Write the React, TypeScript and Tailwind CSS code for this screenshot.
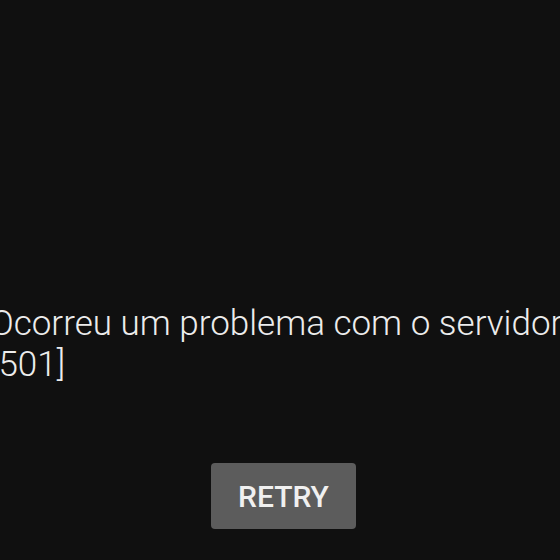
export default function App() {
  return (
    <div
      className="flex h-[560px] w-[560px] flex-col overflow-hidden bg-[#101010] pt-[303px]"
      style={{ fontFamily: 'Roboto, "Noto Sans", sans-serif' }}
    >
      <p className="-ml-[10px] whitespace-nowrap text-[35px] leading-[41px] font-light text-[#ececec]">
        Ocorreu um problema com o servidor
        <br />
        [501]
      </p>
      <div className="mt-[78px] flex justify-center">
        <button className="ml-[7px] flex h-[66px] w-[145px] items-center justify-center rounded-[4px] bg-[#5c5c5c] text-[30px] font-medium text-[#f0f0f0]">
          RETRY
        </button>
      </div>
    </div>
  )
}
